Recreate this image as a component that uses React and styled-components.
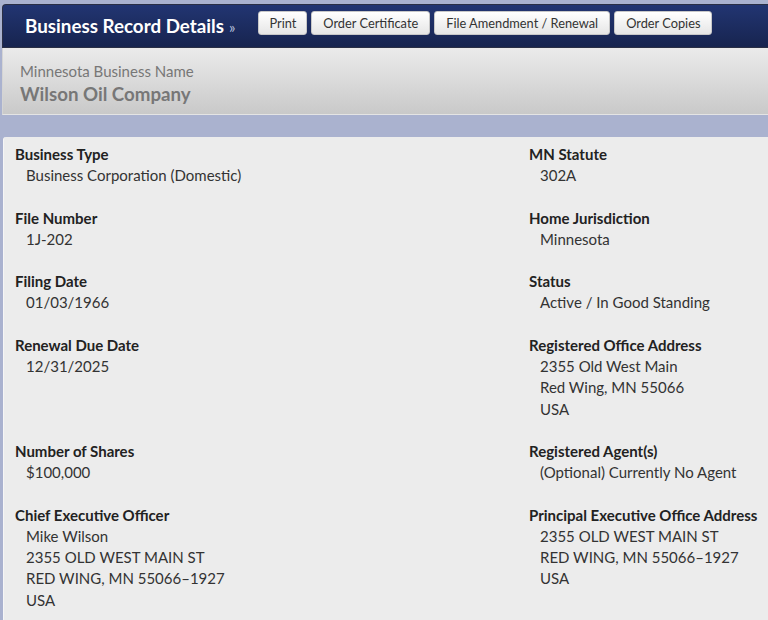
import React from 'react';
import styled, { createGlobalStyle } from 'styled-components';

const GlobalStyle = createGlobalStyle`
  html, body {
    margin: 0;
    padding: 0;
    background: #aab2cf;
    font-family: Lato, "Open Sans", sans-serif;
  }
`;

const Page = styled.div`
  padding: 4px 0 0 2px;
  overflow: hidden;
  height: 620px;
  box-sizing: border-box;
`;

const Header = styled.header`
  height: 44px;
  box-sizing: border-box;
  display: flex;
  align-items: flex-start;
  padding: 5px 0 0 22px;
  border: 1px solid #2a2f45;
  border-right: none;
  border-radius: 4px 0 0 0;
  background: linear-gradient(#223572, #17244f);
`;

const Title = styled.h1`
  margin: 0;
  font-size: 18.8px;
  font-weight: 700;
  color: #fff;
  line-height: 32px;
  margin-right: 23px;
  white-space: nowrap;
  span {
    font-size: 15px;
    font-weight: 400;
    color: #b8c0dd;
    margin-left: 5px;
  }
`;

const Buttons = styled.div`
  display: flex;
  gap: 4px;
  padding-top: 1px;
`;

const Button = styled.button`
  height: 24px;
  padding: 0 ${(p) => p.$pad || 11}px;
  border: 1px solid #c8c8c8;
  border-radius: 3px;
  background: linear-gradient(#ffffff, #e6e6e6);
  font-family: Lato, sans-serif;
  font-size: 12.8px;
  color: #333;
  cursor: pointer;
  white-space: nowrap;
`;

const NamePanel = styled.section`
  height: 67px;
  box-sizing: border-box;
  padding: 13px 0 0 17px;
  border-left: 1px solid #d4d4d4;
  border-bottom: 1px solid #e4e4e4;
  background: linear-gradient(#ebebeb, #c9c9c9);
  color: #777;
`;

const NameLabel = styled.div`
  font-size: 15px;
  line-height: 21px;
`;

const NameValue = styled.div`
  font-size: 18.7px;
  font-weight: 700;
  line-height: 25px;
`;

const Details = styled.section`
  margin-top: 22px;
  margin-left: 1px;
  padding: 7px 0 40px 11px;
  background: #ececec;
  border-left: 1px solid #f6f6f6;
  border-radius: 3px 0 0 0;
  display: grid;
  grid-template-columns: 514px 1fr;
  align-content: start;
  color: #333;
`;

const Field = styled.div`
  margin-bottom: 21px;
  font-size: 15px;
  line-height: 21.3px;
`;

const Label = styled.div`
  font-weight: 700;
  color: #222;
  white-space: nowrap;
`;

const Value = styled.div`
  padding-left: 11px;
  white-space: nowrap;
`;

const fields = [
  ['Business Type', ['Business Corporation (Domestic)']],
  ['MN Statute', ['302A']],
  ['File Number', ['1J-202']],
  ['Home Jurisdiction', ['Minnesota']],
  ['Filing Date', ['01/03/1966']],
  ['Status', ['Active / In Good Standing']],
  ['Renewal Due Date', ['12/31/2025']],
  ['Registered Office Address', ['2355 Old West Main', 'Red Wing, MN 55066', 'USA']],
  ['Number of Shares', ['$100,000']],
  ['Registered Agent(s)', ['(Optional) Currently No Agent']],
  ['Chief Executive Officer', ['Mike Wilson', '2355 OLD WEST MAIN ST', 'RED WING, MN 55066–1927', 'USA']],
  ['Principal Executive Office Address', ['2355 OLD WEST MAIN ST', 'RED WING, MN 55066–1927', 'USA']],
];

const App = () => {
  return (
    <Page>
      <GlobalStyle />
      <Header>
        <Title>
          Business Record Details<span>»</span>
        </Title>
        <Buttons>
          <Button $pad={10}>Print</Button>
          <Button>Order Certificate</Button>
          <Button>File Amendment / Renewal</Button>
          <Button>Order Copies</Button>
        </Buttons>
      </Header>
      <NamePanel>
        <NameLabel>Minnesota Business Name</NameLabel>
        <NameValue>Wilson Oil Company</NameValue>
      </NamePanel>
      <Details>
        {fields.map(([label, values]) => (
          <Field key={label}>
            <Label>{label}</Label>
            {values.map((v) => (
              <Value key={v}>{v}</Value>
            ))}
          </Field>
        ))}
      </Details>
    </Page>
  );
};

export default App;
